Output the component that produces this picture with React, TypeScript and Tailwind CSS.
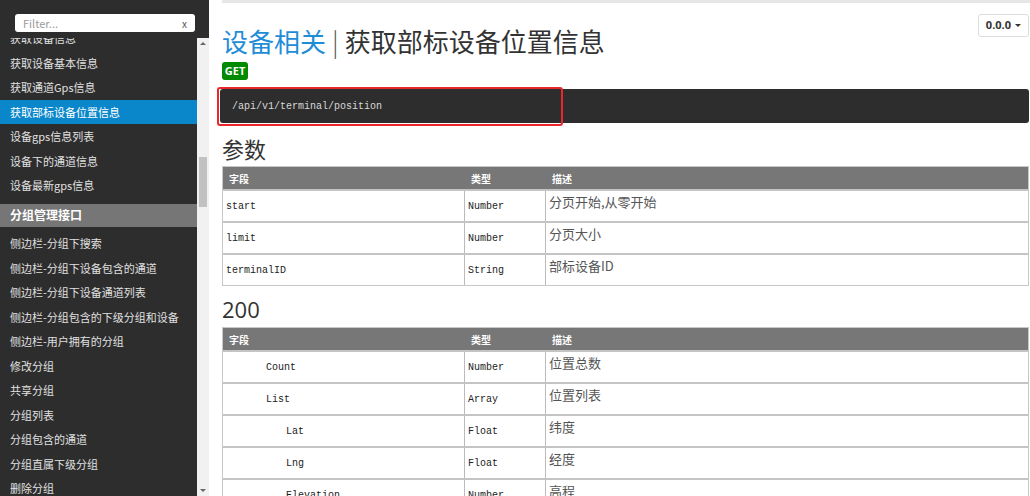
import React from 'react';

const cjk = { fontFamily: '"Noto Sans CJK SC", "Noto Sans", sans-serif' };
const mono = { fontFamily: '"Liberation Mono", "Noto Sans CJK SC", monospace' };

const topItems = ['获取设备信息', '获取设备基本信息', '获取通道Gps信息', '获取部标设备位置信息', '设备gps信息列表', '设备下的通道信息', '设备最新gps信息'];
const groupItems = [
  '侧边栏-分组下搜索',
  '侧边栏-分组下设备包含的通道',
  '侧边栏-分组下设备通道列表',
  '侧边栏-分组包含的下级分组和设备',
  '侧边栏-用户拥有的分组',
  '修改分组',
  '共享分组',
  '分组列表',
  '分组包含的通道',
  '分组直属下级分组',
  '删除分组',
];

const params = [
  { field: 'start', type: 'Number', desc: '分页开始,从零开始', indent: 0 },
  { field: 'limit', type: 'Number', desc: '分页大小', indent: 0 },
  { field: 'terminalID', type: 'String', desc: '部标设备ID', indent: 0 },
];

const results = [
  { field: 'Count', type: 'Number', desc: '位置总数', indent: 1 },
  { field: 'List', type: 'Array', desc: '位置列表', indent: 1 },
  { field: 'Lat', type: 'Float', desc: '纬度', indent: 2 },
  { field: 'Lng', type: 'Float', desc: '经度', indent: 2 },
  { field: 'Elevation', type: 'Number', desc: '高程', indent: 2 },
];

type Row = { field: string; type: string; desc: string; indent: number };

const Sidebar: React.FC = () => (
  <div className="w-[209px] shrink-0 flex flex-col bg-[#2d2d2d]" style={cjk}>
    <div className="h-[38px] shrink-0 pt-[14px] pl-[15px]">
      <div className="w-[180px] h-[18px] bg-white rounded-[3px] flex items-center justify-between px-[8px] text-[11px]">
        <span className="text-[#9a9a9a]">Filter...</span>
        <span className="text-[#555] text-[10px]">x</span>
      </div>
    </div>
    <div className="flex flex-1 min-h-0">
      <div className="w-[197px] overflow-hidden">
        <div className="-mt-[12px]">
          {topItems.map((t) => (
            <div
              key={t}
              className={`h-[24.5px] flex items-center pl-[10px] text-[11px] ${
                t === '获取部标设备位置信息' ? 'bg-[#0a87ca] text-white' : 'text-[#e0e0e0]'
              }`}
            >
              {t}
            </div>
          ))}
          <div className="mt-[6px] mb-[4.5px] h-[23px] flex items-center pl-[10px] bg-[#767676] text-white text-[12px] font-bold">
            分组管理接口
          </div>
          {groupItems.map((t) => (
            <div key={t} className="h-[24.5px] flex items-center pl-[10px] text-[11px] text-[#e0e0e0]">
              {t}
            </div>
          ))}
        </div>
      </div>
      <div className="w-[12px] bg-[#f1f1f1] flex flex-col items-center justify-between py-[4px]">
        <div className="flex flex-col items-center w-full">
          <span className="w-0 h-0 border-l-[3px] border-r-[3px] border-b-[3px] border-transparent border-b-[#666]" />
          <div className="w-[8px] h-[50px] bg-[#c1c1c1] mt-[112px]" />
        </div>
        <span className="w-0 h-0 border-l-[3px] border-r-[3px] border-t-[3px] border-transparent border-t-[#666]" />
      </div>
    </div>
  </div>
);

const Table: React.FC<{ rows: Row[] }> = ({ rows }) => (
  <div className="w-[807px] border border-[#c8c8c8]">
    <div className="h-[22px] bg-[#777] flex text-white text-[10px] font-bold" style={cjk}>
      <div className="w-[242px] pl-[6px] flex items-center">字段</div>
      <div className="w-[81px] pl-[6px] flex items-center">类型</div>
      <div className="flex-1 pl-[6px] flex items-center">描述</div>
    </div>
    {rows.map((r) => (
      <div key={r.field} className="h-[32px] flex border-t-2 border-[#c4c4c4]">
        <div
          className={`w-[242px] flex items-center text-[10px] text-[#222] border-r border-[#bbb] ${
            r.indent === 0 ? 'pl-[3px]' : r.indent === 1 ? 'pl-[43px]' : 'pl-[63px]'
          }`}
          style={mono}
        >
          {r.field}
        </div>
        <div className="w-[81px] flex items-center pl-[3px] text-[10px] text-[#222] border-r border-[#bbb]" style={mono}>
          {r.type}
        </div>
        <div className="flex-1 pl-[3px] pt-[1px] text-[13px] leading-[20px] text-[#555]" style={cjk}>
          {r.desc}
        </div>
      </div>
    ))}
  </div>
);

const App: React.FC = () => (
  <div className="w-[1030px] h-[496px] overflow-hidden flex bg-white">
    <Sidebar />
    <div className="flex-1 flex flex-col">
      <div className="h-[3px] ml-[13px] bg-[#e6e6e6] shrink-0" />
      <div className="pl-[13px] pr-[1px] relative">
        <div className="absolute right-[1px] top-[11px] h-[23px] px-[7px] border border-[#ddd] rounded-[3px] flex items-center gap-[4px] text-[11px] font-bold text-[#333]" style={{ fontFamily: '"Open Sans", sans-serif' }}>
          0.0.0
          <span className="w-0 h-0 border-l-[3px] border-r-[3px] border-t-[3px] border-transparent border-t-[#333]" />
        </div>
        <h1 className="mt-[20px] h-[36px] flex items-center text-[26px] leading-none" style={cjk}>
          <span className="text-[#1f8dd6]">设备相关</span>
          <span className="text-[#555] mx-[6px] font-light">|</span>
          <span className="text-[#333]">获取部标设备位置信息</span>
        </h1>
        <div className="mt-[3px] w-[26px] h-[18px] bg-[#008a00] rounded-[3px] text-white text-[11px] font-bold flex items-center justify-center" style={{ fontFamily: '"Open Sans", sans-serif' }}>
          GET
        </div>
        <div className="relative mt-[9px] -ml-[2px] h-[34px] bg-[#2d2d2d] rounded-[3px] flex items-center pl-[12px] text-[10px] text-[#d8d8d8]" style={mono}>
          /api/v1/terminal/position
          <div className="absolute -left-[3px] -top-[2px] w-[346px] h-[39px] border-2 border-[#e8262c] rounded-[3px]" />
        </div>
        <h2 className="mt-[11px] h-[28px] flex items-center text-[22px] text-[#333]" style={cjk}>参数</h2>
        <div className="mt-[4px]">
          <Table rows={params} />
        </div>
        <h2 className="mt-[9px] h-[28px] flex items-center text-[22px] text-[#333]" style={{ fontFamily: '"Open Sans", sans-serif' }}>200</h2>
        <div className="mt-[4px]">
          <Table rows={results} />
        </div>
      </div>
    </div>
  </div>
);

export default App;
